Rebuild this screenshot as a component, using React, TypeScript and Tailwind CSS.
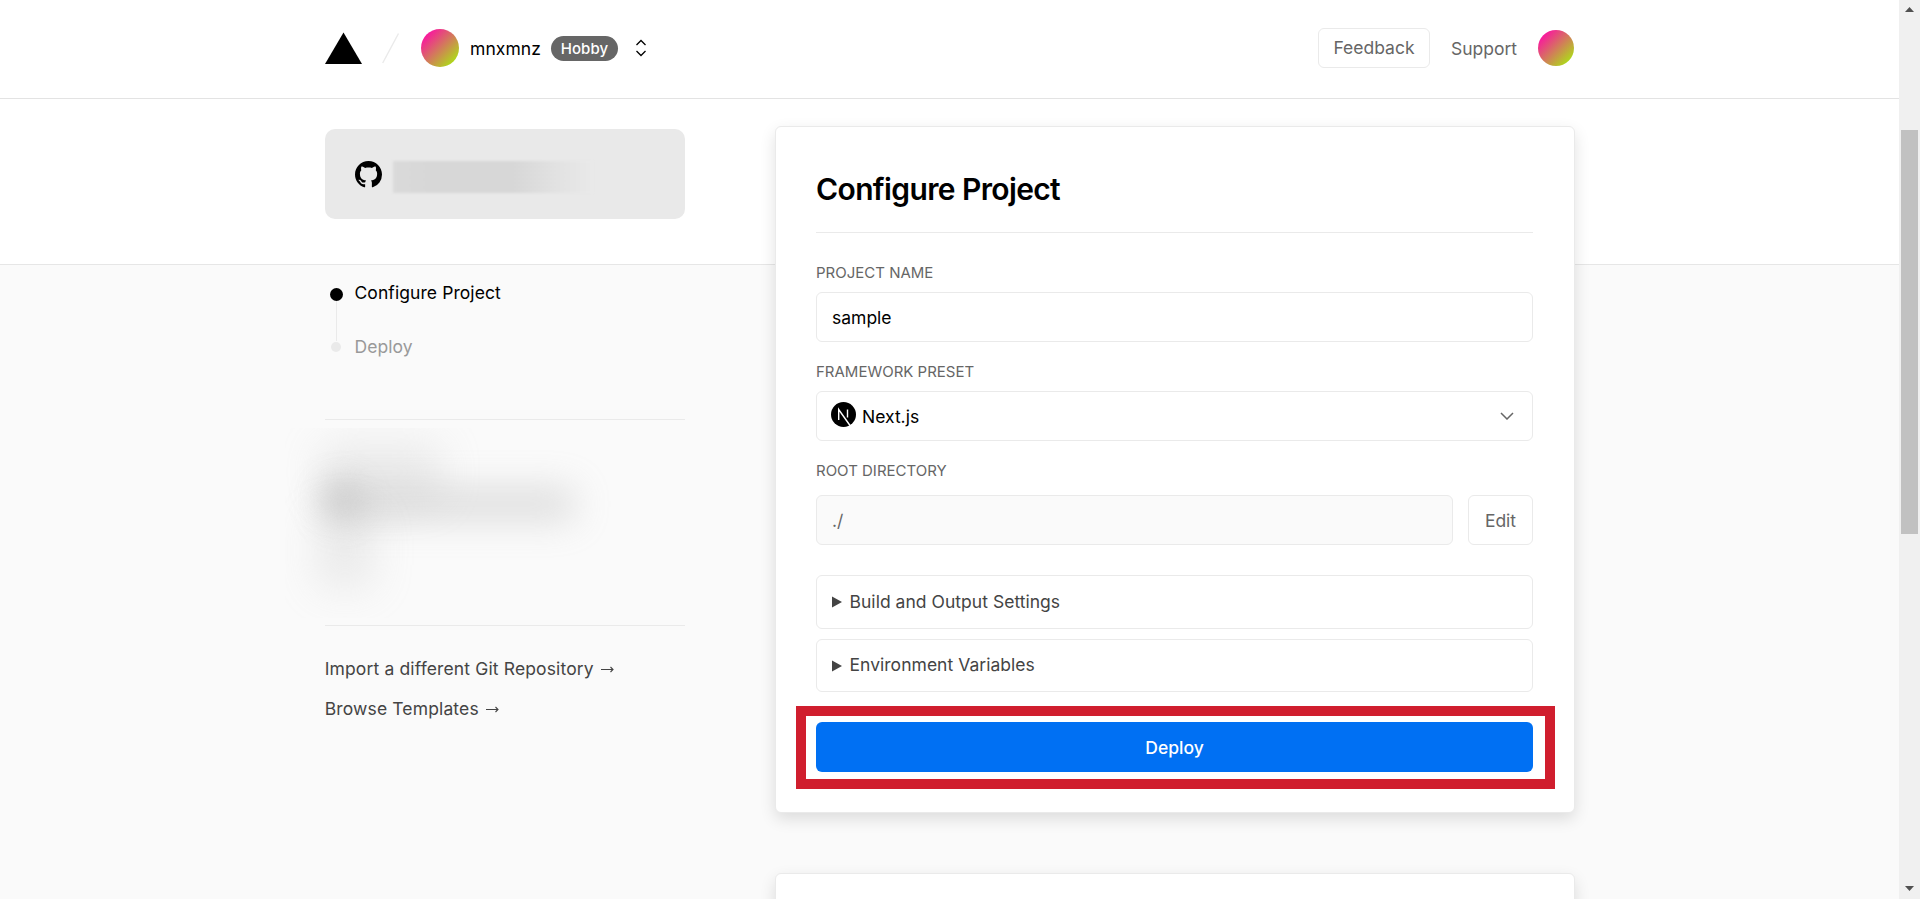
import React from "react";

const GITHUB =
  "M8 0C3.58 0 0 3.58 0 8c0 3.54 2.29 6.53 5.47 7.59.4.07.55-.17.55-.38 0-.19-.01-.82-.01-1.49-2.01.37-2.53-.49-2.69-.94-.09-.23-.48-.94-.82-1.13-.28-.15-.68-.52-.01-.53.63-.01 1.08.58 1.23.82.72 1.21 1.87.87 2.33.66.07-.52.28-.87.51-1.07-1.78-.2-3.64-.89-3.64-3.95 0-.87.31-1.59.82-2.15-.08-.2-.36-1.02.08-2.12 0 0 .67-.21 2.2.82.64-.18 1.32-.27 2-.27s1.36.09 2 .27c1.53-1.04 2.2-.82 2.2-.82.44 1.1.16 1.92.08 2.12.51.56.82 1.27.82 2.15 0 3.07-1.87 3.75-3.65 3.95.29.25.54.73.54 1.48 0 1.07-.01 1.93-.01 2.2 0 .21.15.46.55.38A8.01 8.01 0 0 0 16 8c0-4.42-3.58-8-8-8z";

function Header() {
  return (
    <header className="flex h-[99px] shrink-0 items-center border-b border-[#e3e3e3] bg-white pr-[325px] pb-0.5 pl-[325px]">
      <svg className="h-8 w-[37px]" viewBox="0 0 37 32">
        <path d="M18.5 0.5 37 32H0Z" />
      </svg>
      <svg className="ml-5 h-8 w-[18px]" viewBox="0 0 18 32" stroke="#eaeaea" strokeWidth="1.4">
        <path d="M0.7 31 16.5 1.5" />
      </svg>
      <div className="ml-[21px] size-[38px] rounded-full bg-[linear-gradient(135deg,#fb12a2_12%,#a8e810_92%)]" />
      <span className="mt-0.5 ml-[11px] w-[71px] text-[17.5px] tracking-[0.08px] text-black">mnxmnz</span>
      <span className="mt-px ml-[10px] flex h-[25px] w-[67px] items-center justify-center rounded-full bg-[#666] pt-px text-[15px] font-medium tracking-[0.1px] text-white">
        Hobby
      </span>
      <svg className="ml-[17px] h-[18px] w-3" viewBox="0 0 12 18" fill="none" stroke="#000" strokeWidth="1.3">
        <path d="M1.5 6 6 1.5 10.500 6M1.500 12 6 16.500 10.500 12" />
      </svg>
      <div className="ml-auto flex items-center">
        <button className="flex h-10 w-28 items-center justify-center rounded-[6px] border border-[#eaeaea] text-[17.5px] text-[#666]">
          Feedback
        </button>
        <a className="mt-0.5 ml-[21px] w-[66px] text-[17.5px] text-[#666]">Support</a>
        <div className="ml-[21px] size-9 rounded-full bg-[linear-gradient(135deg,#fb12a2_12%,#a8e810_92%)]" />
      </div>
    </header>
  );
}

function Redacted() {
  return (
    <div className="relative -ml-10 mt-2 h-[190px] w-[400px] overflow-hidden">
      <div className="absolute top-4 left-9 h-14 w-[120px] bg-[#bbb] opacity-25 blur-[20px]" />
      <div className="absolute top-[52px] left-8 h-10 w-[46px] rounded-full bg-[#888] opacity-25 blur-[16px]" />
      <div className="absolute top-[60px] left-11 h-8 w-[245px] bg-[#a8a8a8] opacity-36 blur-[18px]" />
      <div className="absolute top-[85px] left-8 h-[75px] w-[56px] bg-[#bbb] opacity-25 blur-[20px]" />
    </div>
  );
}

function Arrow() {
  return (
    <svg className="ml-[7px] h-2 w-[13px]" viewBox="0 0 13 8" fill="none" stroke="#444" strokeWidth="1.1">
      <path d="M0 4.500H12M9.500 2 12 4.500 9.500 7" />
    </svg>
  );
}

function Sidebar() {
  return (
    <aside className="mt-[30px] w-[360px] shrink-0">
      <div className="flex h-[90px] items-center rounded-[10px] bg-[#e9e9e9] pl-[30px]">
        <svg className="size-[27px]" viewBox="0 0 16 16">
          <path d={GITHUB} />
        </svg>
        <div className="mt-[5px] ml-[11px] h-8 w-[200px] bg-[linear-gradient(90deg,#dadada,#d7d7d7_20%,#d7d7d7_60%,#e2e2e2_82%,#e9e9e9)] blur-[0.8px]" />
      </div>
      <ol className="mt-[60px] text-[17.5px] leading-7">
        <li className="flex h-7 items-center tracking-[0.08px] text-black">
          <span className="mt-0.5 ml-[5px] size-[13px] rounded-full bg-black" />
          <span className="ml-[11.5px]">Configure Project</span>
        </li>
        <li className="mt-[-6px] mb-[-8px] ml-[11px] h-10 w-px bg-[#eaeaea]" />
        <li className="flex h-7 items-center tracking-[0.08px] text-[#999]">
          <span className="ml-[6px] size-[10px] rounded-full bg-[#eaeaea]" />
          <span className="ml-[13.5px]">Deploy</span>
        </li>
      </ol>
      <hr className="mt-[58px] border-[#eaeaea]" />
      <Redacted />
      <hr className="mt-[7px] border-[#eaeaea]" />
      <nav className="mt-[29px] flex flex-col gap-3 text-[17.5px] leading-7 tracking-[0.14px] text-[#444]">
        <a className="-ml-[0.3px] flex items-center">
          Import a different Git Repository
          <Arrow />
        </a>
        <a className="-ml-[0.3px] flex items-center">
          Browse Templates
          <Arrow />
        </a>
      </nav>
    </aside>
  );
}

function Label({ children }: { children: React.ReactNode }) {
  return <div className="text-[15px] leading-5 text-[#666] uppercase">{children}</div>;
}

function Disclosure({ title }: { title: string }) {
  return (
    <div className="flex h-full items-center rounded-[6px] border border-[#eaeaea] pl-[15px] text-[17.5px] text-[#444]">
      <svg className="h-3 w-[10px]" viewBox="0 0 10 12" fill="#444">
        <path d="M0 0.500 10 6 0 11.500Z" />
      </svg>
      <span className="ml-[7.5px] tracking-[0.03px]">{title}</span>
    </div>
  );
}

function ConfigureCard() {
  return (
    <section className="h-[687px] rounded-[6px] border border-[#eaeaea] bg-white pr-[41px] pl-10 shadow-[0_6px_16px_rgba(0,0,0,0.12)]">
      <h1 className="mt-[42px] text-[30px] leading-10 font-semibold tracking-[-0.62px] text-black">Configure Project</h1>
      <hr className="mt-[23px] mb-[30px] border-[#eaeaea]" />
      <Label>Project Name</Label>
      <div className="mt-[9px] flex h-[50px] items-center rounded-[6px] border border-[#eaeaea] pt-0.5 pl-[15px] text-[17.5px] text-black">
        sample
      </div>
      <div className="mt-5">
        <Label>Framework Preset</Label>
      </div>
      <div className="mt-[9px] flex h-[50px] items-center rounded-[6px] border border-[#eaeaea] pr-[18px] pl-[14px] text-[17.5px] text-black">
        <svg className="mb-1 size-[25px]" viewBox="0 0 25 25">
          <circle cx="12.500" cy="12.500" r="12.500" />
          <path d="M7.700 18V7.500L19 23.500M16.500 7.500V15.500" fill="none" stroke="#fff" strokeWidth="1.400" />
        </svg>
        <span className="mt-0.5 ml-[6px]">Next.js</span>
        <svg className="ml-auto h-2 w-[14px]" viewBox="0 0 14 8" fill="none" stroke="#666" strokeWidth="1.500">
          <path d="M1 1 7 7 13 1" />
        </svg>
      </div>
      <div className="mt-5">
        <Label>Root Directory</Label>
      </div>
      <div className="mt-[14px] flex gap-[15px]">
        <div className="flex h-[50px] flex-1 items-center rounded-[6px] border border-[#eaeaea] bg-[#fafafa] pt-0.5 pl-[15px] text-[17.5px] text-[#666]">
          ./
        </div>
        <button className="h-[50px] w-[65px] rounded-[6px] border border-[#eaeaea] pt-0.5 text-[17.5px] text-[#666]">Edit</button>
      </div>
      <div className="mt-[30px] grid grid-rows-[54px_53px] gap-[10px]">
        <Disclosure title="Build and Output Settings" />
        <Disclosure title="Environment Variables" />
      </div>
      <div className="-mr-[22px] -ml-5 mt-[14px] border-[10px] border-[#d01e2e] pt-[6px] pr-3 pb-[7px] pl-[10px]">
        <button className="h-[50px] w-full rounded-[6px] bg-[#0070f3] pt-0.5 text-[17.5px] font-medium text-white">Deploy</button>
      </div>
    </section>
  );
}

function Scrollbar() {
  return (
    <div className="flex w-[21px] shrink-0 flex-col items-center bg-[#f0f0f0]">
      <svg className="mt-[7px] h-[5px] w-[9px]" viewBox="0 0 9 5" fill="#505050">
        <path d="M4.500 0 9 5H0Z" />
      </svg>
      <div className="mt-[118px] h-[404px] w-[17px] bg-[#c1c1c1]" />
      <svg className="mt-auto mb-2 h-[5px] w-[9px]" viewBox="0 0 9 5" fill="#505050">
        <path d="M4.500 5 9 0H0Z" />
      </svg>
    </div>
  );
}

export default function App() {
  return (
    <div className="flex h-[899px] w-[1920px] overflow-hidden bg-[#fafafa] font-[Inter,'Liberation_Sans',sans-serif]">
      <div className="flex min-w-0 flex-1 flex-col">
        <Header />
        <main className="flex min-h-0 flex-1 gap-[90px] overflow-hidden bg-[linear-gradient(#fff_165px,#e6e6e6_165px,#e6e6e6_166px,#fafafa_166px)] pl-[325px]">
          <Sidebar />
          <div className="mt-[27px] w-[800px]">
            <ConfigureCard />
            <section className="mt-[60px] h-40 rounded-[6px] border border-[#eaeaea] bg-white shadow-[0_6px_16px_rgba(0,0,0,0.12)]" />
          </div>
        </main>
      </div>
      <Scrollbar />
    </div>
  );
}
